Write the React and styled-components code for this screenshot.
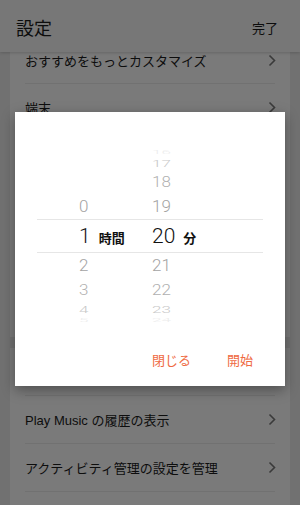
import React from "react";
import styled, { createGlobalStyle } from "styled-components";

const Global = createGlobalStyle`
  html, body {
    margin: 0;
    padding: 0;
    width: 300px;
    height: 505px;
    overflow: hidden;
    background: #ececec;
  }
  * { box-sizing: border-box; }
`;

const JP = `"Noto Sans CJK JP", "Noto Sans", sans-serif`;
const NUM = `Roboto, "Noto Sans CJK JP", sans-serif`;

const Screen = styled.div`
  position: relative;
  width: 300px;
  height: 505px;
  display: flex;
  flex-direction: column;
  background: #ececec;
  font-family: ${JP};
  color: #1c1c1c;
  overflow: hidden;
`;

const Header = styled.header`
  height: 52px;
  flex: none;
  display: flex;
  align-items: center;
  justify-content: space-between;
  padding: 0 22px 0 16px;
  background: #f8f8f8;
  box-shadow: 0 1px 3px rgba(0, 0, 0, 0.18);
  position: relative;
  z-index: 1;
`;

const Title = styled.h1`
  margin: 2px 0 0;
  font-size: 18px;
  font-weight: 400;
  color: #1c1c1c;
`;

const Done = styled.span`
  font-size: 13px;
  color: #1c1c1c;
  margin-top: 3px;
`;

const Scroller = styled.div`
  flex: 1;
  overflow: hidden;
  padding: 0 10px;
`;

const List = styled.div`
  margin-top: -15px;
  display: flex;
  flex-direction: column;
  gap: 11px;
`;

const Card = styled.section`
  background: #ffffff;
  padding-bottom: ${(p) => p.$pb || 0}px;
`;

const Row = styled.div`
  height: ${(p) => p.$h || 47}px;
  margin: 0 15px;
  display: flex;
  align-items: center;
  justify-content: space-between;
  font-size: 13px;
  border-bottom: 1px solid #ececec;
  color: #1c1c1c;
`;

const Label = styled.span`
  font-family: ${(p) => (p.$latin ? `"Liberation Sans", ${JP}` : JP)};
`;

const Chevron = () => (
  <svg width="8" height="13" viewBox="0 0 8 13" style={{ marginRight: -1 }}>
    <path d="M1.5 1.5 L6.5 6.5 L1.5 11.5" fill="none" stroke="#7a7a7a" strokeWidth="1.6" />
  </svg>
);

const Overlay = styled.div`
  position: absolute;
  inset: 0;
  z-index: 5;
  background: rgba(0, 0, 0, 0.52);
  display: flex;
  justify-content: center;
  align-items: flex-start;
  padding-top: 112px;
`;

const Dialog = styled.div`
  width: 270px;
  height: 274px;
  background: #ffffff;
  box-shadow: 0 4px 12px rgba(0, 0, 0, 0.35);
  display: flex;
  flex-direction: column;
  padding-top: 36px;
`;

const Picker = styled.div`
  display: flex;
  flex-direction: column;
`;

const PickRow = styled.div`
  height: ${(p) => p.$h}px;
  display: flex;
  align-items: center;
  margin: 0 22px;
  border-top: ${(p) => (p.$sel ? "1px solid #e6e6e6" : "none")};
  border-bottom: ${(p) => (p.$sel ? "1px solid #e6e6e6" : "none")};
`;

const Cell = styled.div`
  display: flex;
  align-items: baseline;
  width: ${(p) => p.$w}px;
  flex: none;
  transform: scaleY(${(p) => p.$scale});
  line-height: 1;
`;

const Num = styled.span`
  font-family: ${NUM};
  font-weight: 300;
  font-size: ${(p) => (p.$sel ? 21 : 17)}px;
  color: ${(p) => p.$color};
`;

const Unit = styled.span`
  font-family: ${JP};
  font-weight: 700;
  font-size: 13px;
  color: #111;
  margin-left: ${(p) => p.$gap}px;
`;

const Actions = styled.div`
  display: flex;
  justify-content: flex-end;
  gap: 36px;
  padding-right: 32px;
  margin-top: 28px;
`;

const Action = styled.button`
  border: none;
  background: none;
  padding: 0;
  font-family: ${JP};
  font-size: 13px;
  line-height: 16px;
  color: #ef6a42;
`;

const wheel = [
  { h: 8, scale: 0.3, hour: "", min: "16", color: "#ececec" },
  { h: 14, scale: 0.55, hour: "", min: "17", color: "#c9c9c9" },
  { h: 24, scale: 0.88, hour: "", min: "18", color: "#b0b0b0" },
  { h: 25, scale: 0.96, hour: "0", min: "19", color: "#a3a3a3" },
  { h: 34, scale: 1, hour: "1", min: "20", color: "#111", sel: true },
  { h: 25, scale: 0.96, hour: "2", min: "21", color: "#a3a3a3" },
  { h: 24, scale: 0.88, hour: "3", min: "22", color: "#b0b0b0" },
  { h: 14, scale: 0.55, hour: "4", min: "23", color: "#c9c9c9" },
  { h: 8, scale: 0.3, hour: "5", min: "24", color: "#ececec" },
];

export default function App() {
  return (
    <Screen>
      <Global />
      <Header>
        <Title>設定</Title>
        <Done>完了</Done>
      </Header>
      <Scroller>
        <List>
          <Card $pb={18}>
            <Row><Label>おすすめをもっとカスタマイズ</Label><Chevron /></Row>
            <Row><Label>端末</Label><Chevron /></Row>
            <Row><Label>通知</Label><Chevron /></Row>
            <Row><Label>再生</Label><Chevron /></Row>
            <Row><Label>ダウンロード</Label><Chevron /></Row>
            <Row><Label>ライブラリ</Label><Chevron /></Row>
          </Card>
          <Card $pb={20}>
            <Row $h={48}><Label>アカウント</Label><Chevron /></Row>
            <Row $h={48}><Label $latin>Play Music の履歴の表示</Label><Chevron /></Row>
            <Row $h={48}><Label>アクティビティ管理の設定を管理</Label><Chevron /></Row>
          </Card>
        </List>
      </Scroller>
      <Overlay>
        <Dialog>
          <Picker>
            {wheel.map((r, i) => (
              <PickRow key={i} $h={r.h} $sel={r.sel}>
                <Cell $w={73} $scale={r.scale} style={{ marginLeft: 42 }}>
                  <Num $sel={r.sel} $color={r.color}>{r.hour}</Num>
                  {r.sel && <Unit $gap={8}>時間</Unit>}
                </Cell>
                <Cell $w={80} $scale={r.scale}>
                  <Num $sel={r.sel} $color={r.color}>{r.min}</Num>
                  {r.sel && <Unit $gap={8}>分</Unit>}
                </Cell>
              </PickRow>
            ))}
          </Picker>
          <Actions>
            <Action>閉じる</Action>
            <Action>開始</Action>
          </Actions>
        </Dialog>
      </Overlay>
    </Screen>
  );
}
